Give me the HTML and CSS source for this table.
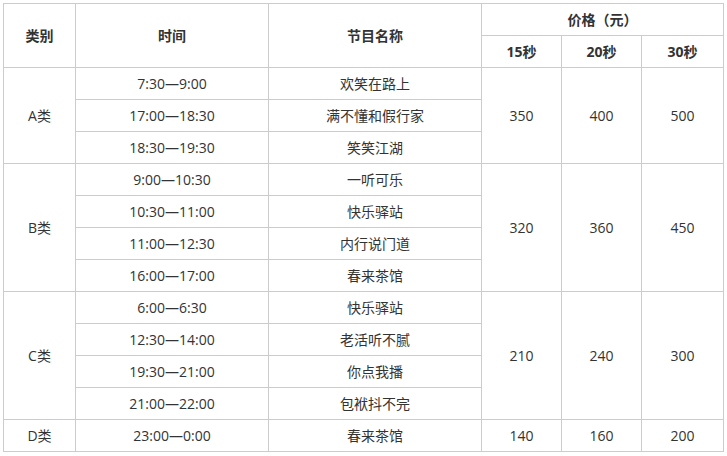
FILE: index.html
```html
<!DOCTYPE html>
<html lang="zh">
<head>
<meta charset="utf-8">
<link rel="stylesheet" href="styles.css">
</head>
<body>
<table class="tbl">
  <colgroup>
    <col class="c1"><col class="c2"><col class="c3"><col class="c4"><col class="c5"><col class="c6">
  </colgroup>
  <thead>
    <tr>
      <th rowspan="2">类别</th>
      <th rowspan="2">时间</th>
      <th rowspan="2">节目名称</th>
      <th colspan="3">价格（元）</th>
    </tr>
    <tr>
      <th>15秒</th>
      <th>20秒</th>
      <th>30秒</th>
    </tr>
  </thead>
  <tbody>
    <tr><td rowspan="3">A类</td><td>7:30—9:00</td><td>欢笑在路上</td><td rowspan="3">350</td><td rowspan="3">400</td><td rowspan="3">500</td></tr>
    <tr><td>17:00—18:30</td><td>满不懂和假行家</td></tr>
    <tr><td>18:30—19:30</td><td>笑笑江湖</td></tr>
    <tr><td rowspan="4">B类</td><td>9:00—10:30</td><td>一听可乐</td><td rowspan="4">320</td><td rowspan="4">360</td><td rowspan="4">450</td></tr>
    <tr><td>10:30—11:00</td><td>快乐驿站</td></tr>
    <tr><td>11:00—12:30</td><td>内行说门道</td></tr>
    <tr><td>16:00—17:00</td><td>春来茶馆</td></tr>
    <tr><td rowspan="4">C类</td><td>6:00—6:30</td><td>快乐驿站</td><td rowspan="4">210</td><td rowspan="4">240</td><td rowspan="4">300</td></tr>
    <tr><td>12:30—14:00</td><td>老活听不腻</td></tr>
    <tr><td>19:30—21:00</td><td>你点我播</td></tr>
    <tr><td>21:00—22:00</td><td>包袱抖不完</td></tr>
    <tr><td>D类</td><td>23:00—0:00</td><td>春来茶馆</td><td>140</td><td>160</td><td>200</td></tr>
  </tbody>
</table>
</body>
</html>
```

FILE: styles.css
```css
html, body {
  margin: 0;
  padding: 0;
  background: #fff;
}
body {
  padding: 3px;
  font-family: "Open Sans", "Noto Sans CJK SC", sans-serif;
  font-size: 14px;
  color: #333;
}
.tbl {
  border-collapse: collapse;
  table-layout: fixed;
  width: 721px;
}
.c1 { width: 72px; }
.c2 { width: 193px; }
.c3 { width: 213px; }
.c4 { width: 80px; }
.c5 { width: 80px; }
.c6 { width: 82px; }
.tbl th, .tbl td {
  border: 1px solid #ccc;
  height: 31px;
  padding: 0;
  text-align: center;
  vertical-align: middle;
  line-height: 16px;
}
.tbl th {
  font-weight: bold;
}
```
